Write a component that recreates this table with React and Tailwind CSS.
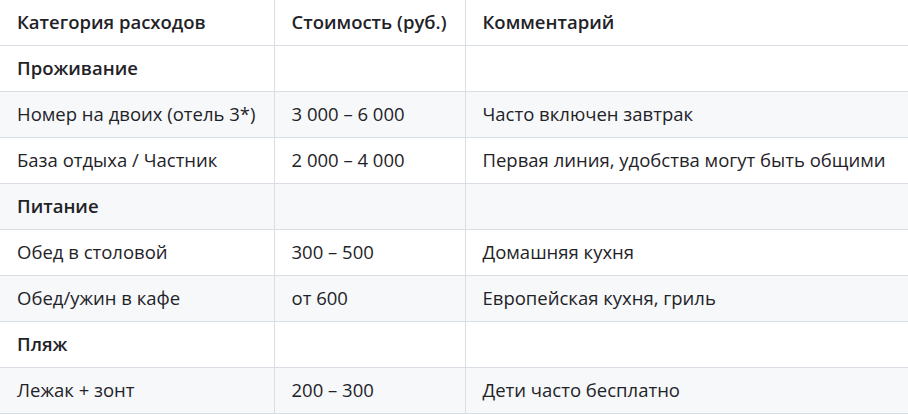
export default function App() {
  const rows = [
    { type: "h", c: ["Категория расходов", "Стоимость (руб.)", "Комментарий"] },
    { type: "s", c: ["Проживание", "", ""] },
    { type: "r", c: ["Номер на двоих (отель 3*)", "3 000 – 6 000", "Часто включен завтрак"] },
    { type: "r", c: ["База отдыха / Частник", "2 000 – 4 000", "Первая линия, удобства могут быть общими"] },
    { type: "s", c: ["Питание", "", ""] },
    { type: "r", c: ["Обед в столовой", "300 – 500", "Домашняя кухня"] },
    { type: "r", c: ["Обед/ужин в кафе", "от 600", "Европейская кухня, гриль"] },
    { type: "s", c: ["Пляж", "", ""] },
    { type: "r", c: ["Лежак + зонт", "200 – 300", "Дети часто бесплатно"] },
  ];
  return (
    <div className="w-[908px] h-[414px] overflow-hidden bg-white" style={{ fontFamily: '"Open Sans", "Noto Sans", sans-serif' }}>
      <table className="w-[908px] border-collapse table-fixed text-[18.5px] text-[#1f2328]">
        <colgroup>
          <col className="w-[274px]" />
          <col className="w-[191px]" />
          <col />
        </colgroup>
        <tbody>
          {rows.map((r, i) => (
            <tr key={i} className={i % 2 === 0 && i > 0 ? "bg-[#f6f8fa]" : "bg-white"}>
              {r.c.map((t, j) => (
                <td
                  key={j}
                  className={
                    (i === 0 ? "h-[45px] " : "h-[46px] ") +
                    "p-0 pl-[17px] align-middle whitespace-nowrap border-b border-[#d8dee4] " +
                    (j < 2 ? "border-r " : "") +
                    (r.type === "r" ? "font-normal" : "font-semibold")
                  }
                >
                  {t}
                </td>
              ))}
            </tr>
          ))}
        </tbody>
      </table>
    </div>
  );
}
